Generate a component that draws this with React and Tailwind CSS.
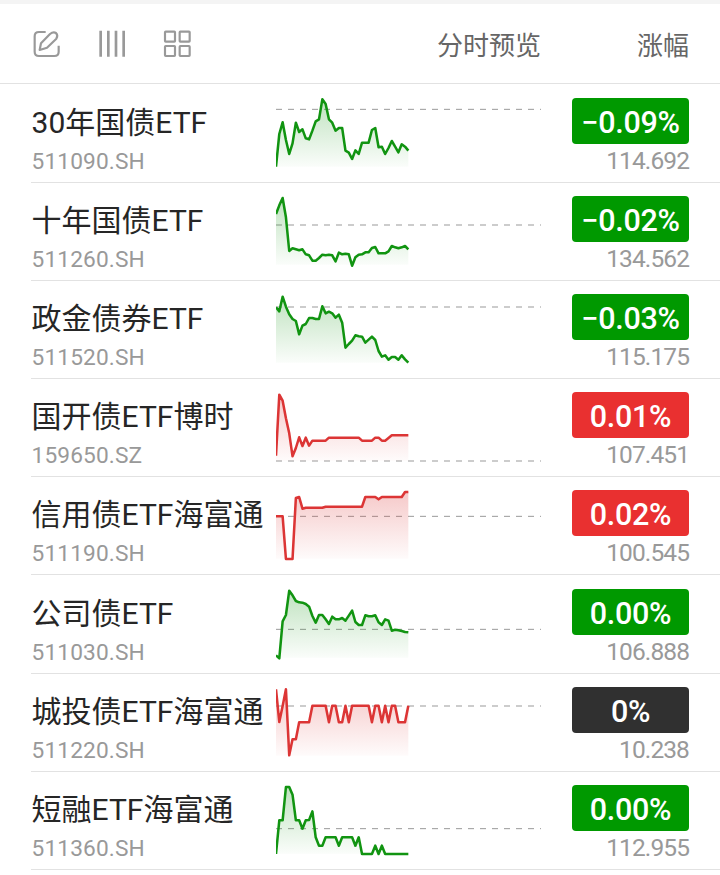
import { useId } from 'react';
import clsx from 'clsx';

// chart units: 3 per pixel, y grows downwards
const STEP = 9.925;
const FLOOR = 230;

const fill = (value, count) => Array(count).fill(value);

const funds = [
    {
        name: '30年国债ETF',
        code: '511090.SH',
        change: '−0.09%',
        price: '114.692',
        trend: 'down',
        base: 58,
        points: [
            230, 132, 97, 150, 192, 160, 98, 126, 118, 145, 148, 122, 94, 88, 28, 42, 88, 98, 122, 114, 114,
            182, 188, 207, 181, 192, 158, 158, 158, 120, 114, 172, 170, 192, 174, 153, 170, 187, 163, 170, 182,
        ],
    },
    {
        name: '十年国债ETF',
        code: '511260.SH',
        change: '−0.02%',
        price: '134.562',
        trend: 'down',
        base: 111,
        points: [
            78, 52, 30, 88, 189, 181, 184, 187, 184, 199, 202, 218, 218, 210, 200, 202, 200, 202, 220, 194, 199,
            197, 199, 233, 208, 200, 199, 193, 193, 180, 177, 196, 196, 196, 190, 174, 178, 181, 178, 174, 184,
        ],
    },
    {
        name: '政金债券ETF',
        code: '511520.SH',
        change: '−0.03%',
        price: '115.175',
        trend: 'down',
        base: 63,
        points: [
            64, 76, 32, 62, 85, 99, 105, 145, 119, 114, 96, 96, 99, 99, 61, 82, 77, 82, 95, 86, 110,
            185, 174, 164, 148, 151, 152, 170, 161, 152, 162, 195, 212, 208, 221, 213, 213, 221, 208, 220, 230,
        ],
    },
    {
        name: '国开债ETF博时',
        code: '159650.SZ',
        change: '0.01%',
        price: '107.451',
        trend: 'up',
        base: 231,
        points: [
            215, 32, 50, 103, 148, 217, 192, 160, 186, 161, 185,
            ...fill(170, 5), ...fill(161, 10), ...fill(170, 4), 161, 161, 170, 170, 162, ...fill(154, 6),
        ],
    },
    {
        name: '信用债ETF海富通',
        code: '511190.SH',
        change: '0.02%',
        price: '100.545',
        trend: 'up',
        base: 103,
        points: [
            103, 103, 103, 231, 231, 231, 48, 45, 80,
            ...fill(77, 6), ...fill(74, 12), ...fill(45, 4), 52, ...fill(45, 7), 30, 30,
        ],
    },
    {
        name: '公司债ETF',
        code: '511030.SH',
        change: '0.00%',
        price: '106.888',
        trend: 'down',
        base: 145,
        spaced: true,
        points: [
            223, 232, 121, 102, 29, 43, 60, 64, 65, 69, 77, 105, 125, 102, 102, 115, 129, 107, 115, 115, 111,
            119, 104, 89, 123, 132, 132, 103, 106, 106, 103, 124, 132, 115, 119, 149, 146, 148, 150, 153, 154,
        ],
    },
    {
        name: '城投债ETF海富通',
        code: '511220.SH',
        change: '0%',
        price: '10.238',
        trend: 'up',
        flat: true,
        base: 81,
        points: [
            31, 129, 81, 31, 229, 181, 181, ...fill(130, 4), ...fill(80, 5), 130, 80, 80, 130, 130, 80, 130,
            ...fill(80, 6), 130, 80, 80, 130, 80, 130, 80, 80, 130, 130, 130, 80,
        ],
    },
    {
        name: '短融ETF海富通',
        code: '511360.SH',
        change: '0.00%',
        price: '112.955',
        trend: 'down',
        base: 155,
        points: [
            231, 130, 130, 30, 30, 53, 130, 130, 155, 130, 129, 103, 181, 206, 206, ...fill(181, 4), 206,
            ...fill(181, 4), 206, 181, ...fill(231, 4), 206, 231, 206, ...fill(231, 8),
        ],
    },
];

function Sparkline({ points, base, trend }) {
    const id = useId();
    const line = points.map((y, i) => `${(i * STEP).toFixed(1)},${y}`).join(' ');
    const color = trend === 'up' ? '#dc3535' : '#119411';

    return (
        <svg viewBox="0 0 795 270" className="mt-[5px] h-[90px] w-[265px] shrink-0">
            <defs>
                <linearGradient id={id} gradientUnits="userSpaceOnUse" x1="0" y1="28" x2="0" y2={FLOOR}>
                    <stop offset="0" stopColor={color} stopOpacity="0.27" />
                    <stop offset="1" stopColor={color} stopOpacity="0.02" />
                </linearGradient>
            </defs>
            <line x1="0" x2="795" y1={base} y2={base} stroke="#999" strokeWidth="3" strokeDasharray="18 18" />
            <polygon points={`0,${FLOOR} ${line} ${40 * STEP},${FLOOR}`} fill={`url(#${id})`} />
            <polyline points={line} fill="none" stroke={color} strokeWidth="7.6" strokeLinejoin="round" />
        </svg>
    );
}

function FundRow({ fund }) {
    return (
        <li className={clsx('ml-[31px] border-b border-[#e2e2e2]', fund.spaced && 'pt-px')}>
            <div className="flex h-[97px]">
                <div className="w-[245px] shrink-0 whitespace-nowrap pl-[0.6px] pt-[18px]">
                    <div className="h-[40px] text-[30px] leading-[40px] text-[#262626]">{fund.name}</div>
                    <div className="mt-[4px] text-[22.7px] leading-[30px] tracking-[0.12px] text-[#999]">{fund.code}</div>
                </div>
                <Sparkline points={fund.points} base={fund.base} trend={fund.trend} />
                <div className="ml-[31px] w-[117px] shrink-0 pt-[13px]">
                    <div
                        className={clsx(
                            'flex h-[46px] items-center justify-center rounded-[4px] pt-[4px] text-[30.5px] font-medium tracking-[-0.3px] text-white',
                            fund.flat ? 'bg-[#303030]' : fund.trend === 'up' ? 'bg-[#e93030]' : 'bg-[#009900]'
                        )}
                    >
                        {fund.change}
                    </div>
                    <div className="mt-[2px] text-right text-[24.5px] leading-[30px] tracking-[-0.9px] text-[#999]">
                        {fund.price}
                    </div>
                </div>
            </div>
        </li>
    );
}

function Toolbar() {
    return (
        <div className="flex items-center gap-[37px] text-[#999]">
            <svg viewBox="0 0 87 87" className="h-[29px] w-[29px]" fill="none" stroke="currentColor" strokeWidth="6.5">
                <path d="M41 9H21Q8 9 8 22V68Q8 81 21 81H67Q80 81 80 68V50" />
                <path d="M23 63 27 43 54 15Q64 7 72 12 79 19 73 29L45 56Z" strokeLinejoin="round" />
            </svg>
            <svg viewBox="0 0 84 87" className="h-[29px] w-[28px]" fill="none" stroke="currentColor" strokeWidth="8">
                <path d="M8 5V83M31 5V83M54 5V83M77 5V83" />
            </svg>
            <svg viewBox="0 0 87 87" className="-ml-px h-[29px] w-[29px]" fill="none" stroke="currentColor" strokeWidth="6.5">
                <rect x="9" y="8" width="30" height="30" rx="2" />
                <rect x="53" y="8" width="30" height="30" rx="2" />
                <rect x="9" y="51" width="30" height="30" rx="2" />
                <rect x="53" y="51" width="30" height="30" rx="2" />
            </svg>
        </div>
    );
}

export default function App() {
    return (
        <div className="h-[875px] w-[720px] overflow-hidden border-t-4 border-[#f4f4f4] bg-white font-['Roboto','Noto_Sans_CJK_SC',sans-serif]">
            <header className="flex h-[80px] items-center border-b border-[#e2e2e2] pl-[32px] pr-[31px] text-[26px] text-[#666]">
                <Toolbar />
                <span className="ml-auto pt-[5px]">分时预览</span>
                <span className="ml-[96px] pt-[5px]">涨幅</span>
            </header>
            <ul className="pt-px">
                {funds.map((fund) => (
                    <FundRow key={fund.code} fund={fund} />
                ))}
            </ul>
        </div>
    );
}
